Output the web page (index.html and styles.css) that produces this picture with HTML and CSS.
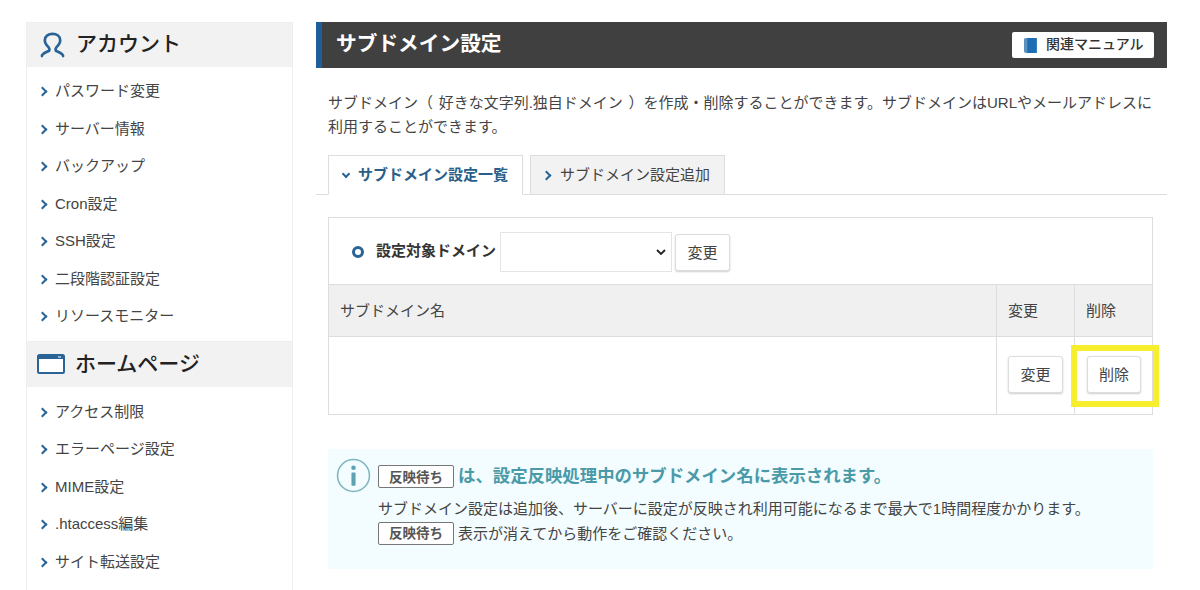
FILE: index.html
```html
<!DOCTYPE html>
<html lang="ja">
<head>
<meta charset="utf-8">
<title>サブドメイン設定</title>
<link rel="stylesheet" href="styles.css">
</head>
<body>
<div class="page">
  <aside class="sidebar">
    <h2 class="side-head">
      <svg class="side-icon" viewBox="0 0 26 26"><path d="M2 24.500c0-2.500 3.500-3.500 7.500-5.500.5-1.500.3-2.500-.5-3.500C6.500 13 5 10.500 5 8c0-4 3.500-6.500 8-6.500S21 4 21 8c0 2.500-1.500 5-4 7.500-.8 1-1 2-.5 3.500 4 2 7.500 3 7.500 5.500" fill="none" stroke="#2a6496" stroke-width="2.800" stroke-linecap="round" stroke-linejoin="round"/></svg>
      <span>アカウント</span>
    </h2>
    <ul class="side-list">
      <li>パスワード変更</li>
      <li>サーバー情報</li>
      <li>バックアップ</li>
      <li>Cron設定</li>
      <li>SSH設定</li>
      <li>二段階認証設定</li>
      <li>リソースモニター</li>
    </ul>
    <h2 class="side-head side-head-home">
      <svg class="side-icon-wide" viewBox="0 0 28 20"><rect x="1" y="1" width="26" height="18" rx="1.500" fill="#fff" stroke="#2a6496" stroke-width="2"/><rect x="1" y="1" width="26" height="4" fill="#2a6496"/><rect x="21" y="2.500" width="3" height="1" fill="#fff"/></svg>
      <span>ホームページ</span>
    </h2>
    <ul class="side-list side-list-home">
      <li>アクセス制限</li>
      <li>エラーページ設定</li>
      <li>MIME設定</li>
      <li>.htaccess編集</li>
      <li>サイト転送設定</li>
    </ul>
  </aside>
  <main class="main">
    <header class="title-bar">
      <h1>サブドメイン設定</h1>
      <a class="manual">
        <svg class="book" viewBox="0 0 14 16"><path d="M1 3a2 2 0 0 1 2-2h10v14H3a2 2 0 0 1-2-2z" fill="#1f6db3"/><path d="M1 3a2 2 0 0 1 2-2h1v14H3a2 2 0 0 1-2-2z" fill="#5e93c0"/></svg>
        <span>関連マニュアル</span>
      </a>
    </header>
    <p class="intro">サブドメイン（ 好きな文字列.独自ドメイン ）を作成・削除することができます。サブドメインはURLやメールアドレスに利用することができます。</p>
    <nav class="tabs">
      <div class="tab tab-active"><span class="chev-down"></span><span class="tab-text">サブドメイン設定一覧</span></div>
      <div class="tab"><span class="chev"></span><span class="tab-text">サブドメイン設定追加</span></div>
    </nav>
    <section class="panel">
      <div class="filter">
        <span class="ring"></span>
        <label class="filter-label">設定対象ドメイン</label>
        <div class="select"><svg class="select-arrow" viewBox="0 0 10 6"><path d="M1 1l4 4 4-4" fill="none" stroke="#222" stroke-width="1.800"/></svg></div>
        <button class="btn btn-filter">変更</button>
      </div>
      <div class="grid grid-head">
        <div class="cell">サブドメイン名</div>
        <div class="cell">変更</div>
        <div class="cell">削除</div>
      </div>
      <div class="grid grid-body">
        <div class="cell"></div>
        <div class="cell cell-btn"><button class="btn">変更</button></div>
        <div class="cell cell-btn"><button class="btn btn-narrow">削除</button><span class="highlight"></span></div>
      </div>
    </section>
    <section class="notice">
      <svg class="info" viewBox="0 0 34 34"><circle cx="17" cy="17" r="15.500" fill="none" stroke="#7fb5bf" stroke-width="1.500"/><circle cx="17" cy="9.500" r="2.200" fill="#5ca2b0"/><rect x="15" y="14" width="4" height="13" rx="1" fill="#5ca2b0"/></svg>
      <div class="notice-body">
        <h3 class="notice-title"><span class="tag">反映待ち</span><span class="notice-head-text">は、設定反映処理中のサブドメイン名に表示されます。</span></h3>
        <p class="notice-text">サブドメイン設定は追加後、サーバーに設定が反映され利用可能になるまで最大で1時間程度かかります。</p>
        <p class="notice-text"><span class="tag">反映待ち</span>表示が消えてから動作をご確認ください。</p>
      </div>
    </section>
  </main>
</div>
</body>
</html>
```
FILE: styles.css
```css
* { box-sizing: border-box; }
html, body { margin: 0; padding: 0; height: 590px; overflow: hidden; background: #fff; }
body { font-family: "Liberation Sans", "Noto Sans CJK JP", sans-serif; color: #444; font-size: 15px; }
.page { display: flex; gap: 23px; padding: 22px 33px 0 26px; }
.sidebar { width: 267px; height: 568px; flex: none; border-right: 1px solid #eee; border-left: 1px solid #eee; }
.side-head { margin: 0; height: 45px; background: #f2f2f2; display: flex; align-items: center; padding-left: 13px; font-size: 21px; font-weight: 500; color: #222; gap: 11px; border-top: 1px solid #eee; }
.side-head span { padding-bottom: 6px; }
.side-head-home { padding-left: 10px; gap: 10px; height: 46px; }
.side-head-home span { padding-bottom: 4px; }
.side-icon { width: 25px; height: 26px; }
.side-icon-wide { width: 28px; height: 20px; }
.side-list { list-style: none; margin: 0; padding: 5px 0 6px; }
.side-list-home { padding-top: 6px; }
.side-list li { height: 37.5px; line-height: 37.5px; padding-left: 28px; position: relative; }
.side-list li::before { content: ""; position: absolute; left: 12px; top: 16px; width: 5px; height: 5px; border-top: 2px solid #2a6496; border-right: 2px solid #2a6496; transform: rotate(45deg); }
.main { width: 851px; flex: none; }
.title-bar { height: 46px; background: #404040; border-left: 6px solid #1f5f99; display: flex; align-items: center; justify-content: space-between; padding: 0 13px 0 14px; }
.title-bar h1 { margin: 0; font-size: 20.700px; font-weight: 700; color: #fff; padding-bottom: 6px; }
.manual { width: 142px; height: 26px; background: #fff; border-radius: 2px; display: flex; align-items: center; padding-left: 11px; gap: 8px; font-size: 14px; font-weight: 500; color: #333; }
.manual span { padding-bottom: 5px; }
.book { width: 15px; height: 17px; }
.intro { margin: 0; padding: 23px 12px 0; line-height: 24px; height: 71px; word-spacing: 1.500px; }
.tabs { display: flex; gap: 7px; padding-left: 12px; border-bottom: 1px solid #ddd; height: 40px; margin-top: 16px; }
.tab { width: 195px; height: 40px; border: 1px solid #ddd; background: #f2f2f2; display: flex; align-items: center; padding-left: 12px; gap: 8px; }
.tab-text { padding-bottom: 4px; }
.tab-active { background: #fff; border-bottom-color: #fff; color: #2a5f8a; font-weight: 700; font-size: 15px; padding-left: 13px; }
.chev { width: 7px; height: 7px; border-top: 2px solid #2a6496; border-right: 2px solid #2a6496; transform: rotate(45deg); margin-right: 2px; }
.chev-down { width: 6px; height: 6px; border-bottom: 2px solid #2a6496; border-right: 2px solid #2a6496; transform: rotate(45deg); margin: -3px 1px 0 1px; }
.panel { margin: 22px 14px 0 12px; border: 1px solid #ddd; }
.filter { height: 66px; display: flex; align-items: center; padding: 2px 0 0 23px; }
.ring { width: 12px; height: 12px; border: 3px solid #2a6496; border-radius: 50%; margin-right: 12px; }
.filter-label { font-weight: 700; font-size: 15px; color: #333; margin-right: 4px; padding-bottom: 5px; }
.select { width: 172px; height: 40px; border: 1px solid #e4e4e4; position: relative; }
.select-arrow { position: absolute; right: 5px; top: 16px; width: 10px; height: 6px; }
.btn { width: 55px; height: 37px; background: #fff; border: 1px solid #ddd; border-radius: 3px; box-shadow: 0 1px 2px rgba(0,0,0,.2); font: inherit; color: #444; padding: 0 0 2px; }
.btn-narrow { width: 54px; }
.btn-filter { margin-left: 3px; }
.grid { display: grid; grid-template-columns: 667px 78px 1fr; border-top: 1px solid #ddd; }
.grid-head { height: 52px; background: #f0f0f0; }
.grid-head .cell { padding: 0 0 3px 11px; }
.grid-body { height: 78px; }
.cell { display: flex; align-items: center; padding-left: 12px; }
.cell + .cell { border-left: 1px solid #ddd; }
.cell-btn { position: relative; padding: 0 0 2px 11px; }
.cell-btn + .cell-btn { padding-left: 12px; }
.highlight { position: absolute; left: -4px; top: 8px; width: 88px; height: 62px; border: 6px solid #f7ee2e; pointer-events: none; }
.notice { margin: 34px 14px 0 12px; height: 120px; background: #f3fcfe; display: flex; padding: 9px 0 0 8px; gap: 7px; }
.info { width: 35px; height: 35px; flex: none; }
.notice-title { margin: 6px 0 8px; font-size: 17.400px; font-weight: 700; color: #4a9aa8; display: flex; align-items: center; height: 24px; }
.notice-head-text { padding-bottom: 3px; }
.notice-text { margin: 0; height: 25px; line-height: 23px; display: flex; align-items: center; }
.tag { width: 76px; height: 23px; border: 1px solid #777; background: #fff; border-radius: 2px; font-size: 13.500px; font-weight: 700; color: #555; display: inline-flex; align-items: center; justify-content: center; margin-right: 4px; padding-bottom: 1px; }
```
